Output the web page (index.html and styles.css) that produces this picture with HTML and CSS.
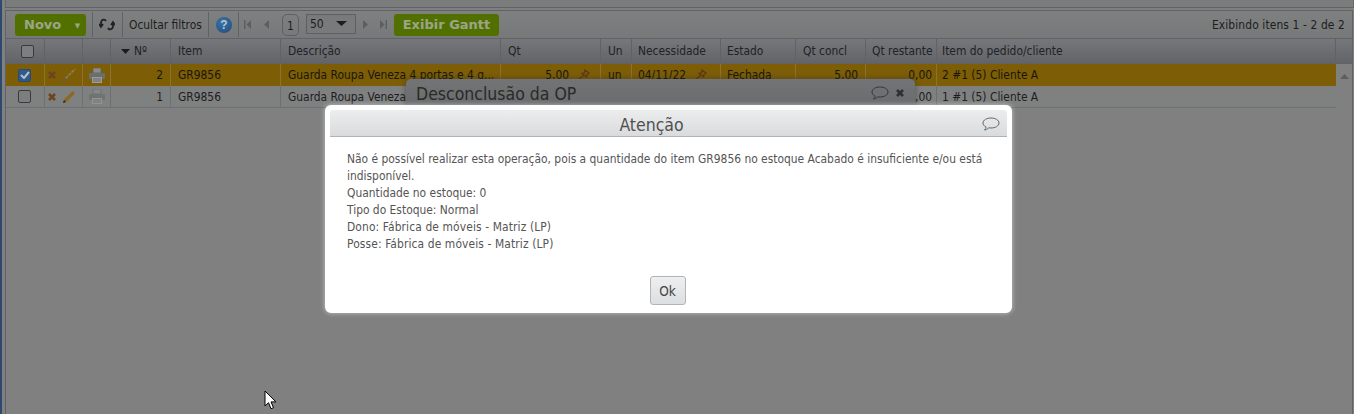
FILE: index.html
```html
<!DOCTYPE html>
<html lang="pt-BR">
<head>
<meta charset="utf-8">
<title>Ordens de produção</title>
<link rel="stylesheet" href="styles.css">
</head>
<body>
<svg class="defs" width="0" height="0" aria-hidden="true">
  <defs>
    <symbol id="x" viewBox="0 0 8 8"><path d="M1 1l6 6M7 1L1 7" stroke="currentColor" stroke-width="2.6" fill="none"/></symbol>
    <symbol id="pencil" viewBox="0 0 14 14"><path d="M1 13l1-3.500L10.500 1 13 3.500 4.500 12z" fill="currentColor"/><path d="M1 13l1-3 2 2z" fill="#2e2a20"/></symbol>
    <symbol id="pencil-thin" viewBox="0 0 14 14"><path d="M1 13L13 1" stroke="#8d8468" stroke-width="1.500" stroke-dasharray="3 1"/><path d="M1 13l2-2" stroke="#54585c" stroke-width="2"/></symbol>
    <symbol id="printer" viewBox="0 0 16 15"><path d="M4 0h8v5H4z" fill="#8a8c8c" stroke="#5d6060" stroke-width=".7"/><path d="M1 5h14a1 1 0 0 1 1 1v5H0V6a1 1 0 0 1 1-1z" fill="#6a6e6e"/><path d="M3 9h10v6H3z" fill="#9a9c9c"/><path d="M4 11h8M4 13h8" stroke="#686b6b"/></symbol>
    <symbol id="pin" viewBox="0 0 14 12"><path d="M8 1l4 3-2 1.500L9.500 8 5 4.500 7.500 4zM6.500 6.500L1 11" fill="none" stroke="currentColor" stroke-width="1.400"/></symbol>
    <symbol id="bubble" viewBox="0 0 18 14"><path d="M9 1c4.400 0 8 2.100 8 5s-3.600 5-8 5c-.8 0-1.500-.1-2.200-.2C5.600 12 4 13 2.500 13c1-.8 1.500-1.800 1.500-3C2.100 9 1 7.600 1 6c0-2.900 3.600-5 8-5z" fill="none" stroke="currentColor"/></symbol>
  </defs>
</svg>

<div class="topstrip"></div>
<main class="frame">
  <div class="toolbar">
    <button class="btn-green novo">Novo <span class="caret">▼</span></button>
    <span class="sep sep-a"></span>
    <svg class="refresh" width="16" height="13" viewBox="0 0 16 13"><path d="M7 3C6 1 2.500 1 2 4.500V8M0 6l2 3 2-3M9 10c1 2 4.500 2 5-1.500V5M12 7l2-3 2 3" fill="none" stroke="#202224" stroke-width="1.800"/></svg>
    <span class="sep"></span>
    <span class="tool-text">Ocultar filtros</span>
    <span class="sep"></span>
    <span class="help">?</span>
    <span class="sep"></span>
    <div class="pager">
      <svg class="pg pg-first" width="7" height="9" viewBox="0 0 7 9"><path d="M0 0h1.500v9H0zM7 0v9L2.500 4.500z" fill="#5c5e60"/></svg>
      <svg class="pg pg-prev" width="6" height="9" viewBox="0 0 6 9"><path d="M6 0v9L1 4.500z" fill="#5c5e60"/></svg>
      <span class="page-num">1</span>
      <div class="select">50<svg width="11" height="5" viewBox="0 0 11 5"><path d="M0 0h11L5.500 5z" fill="#1c1c1c"/></svg></div>
      <svg class="pg pg-next" width="6" height="9" viewBox="0 0 6 9"><path d="M0 0v9l5-4.500z" fill="#5c5e60"/></svg>
      <svg class="pg pg-last" width="7" height="9" viewBox="0 0 7 9"><path d="M7 0H5.500v9H7zM0 0v9l4.500-4.500z" fill="#5c5e60"/></svg>
    </div>
    <button class="btn-green gantt">Exibir Gantt</button>
    <span class="count">Exibindo itens 1 - 2 de 2</span>
  </div>

  <div class="grid-row head">
    <div class="cell center"><span class="check head-check"></span></div>
    <div class="cell"></div>
    <div class="cell"></div>
    <div class="cell sort"><svg width="9" height="5" viewBox="0 0 9 5"><path d="M0 0h9L4.500 5z" fill="#1c1c1c"/></svg>Nº</div>
    <div class="cell">Item</div>
    <div class="cell">Descrição</div>
    <div class="cell">Qt</div>
    <div class="cell">Un</div>
    <div class="cell date">Necessidade</div>
    <div class="cell date">Estado</div>
    <div class="cell">Qt concl</div>
    <div class="cell tight">Qt restante</div>
    <div class="cell last-col">Item do pedido/cliente</div>
    <div class="cell"></div>
  </div>

  <div class="body-wrap">
    <div class="rows">
      <div class="grid-row data selected">
        <div class="cell center"><span class="check row-check checked"><svg width="10" height="8" viewBox="0 0 10 8"><path d="M1 4l3 3 5-6" fill="none" stroke="#b8c0c8" stroke-width="2"/></svg></span></div>
        <div class="cell acts"><svg class="ic-x"><use href="#x"/></svg><svg class="ic-pencil"><use href="#pencil-thin"/></svg></div>
        <div class="cell center"><svg class="ic-printer"><use href="#printer"/></svg></div>
        <div class="cell right">2</div>
        <div class="cell">GR9856</div>
        <div class="cell">Guarda Roupa Veneza 4 portas e 4 g...</div>
        <div class="cell right qt">5,00 <svg class="ic-pin"><use href="#pin"/></svg></div>
        <div class="cell">un</div>
        <div class="cell date">04/11/22 <svg class="ic-pin"><use href="#pin"/></svg></div>
        <div class="cell date">Fechada</div>
        <div class="cell right">5,00</div>
        <div class="cell right rest">0,00</div>
        <div class="cell last-col">2 #1 (5) Cliente A</div>
      </div>
      <div class="grid-row data">
        <div class="cell center"><span class="check row-check"></span></div>
        <div class="cell acts"><svg class="ic-x"><use href="#x"/></svg><svg class="ic-pencil"><use href="#pencil"/></svg></div>
        <div class="cell center"><svg class="ic-printer dim"><use href="#printer"/></svg></div>
        <div class="cell right">1</div>
        <div class="cell">GR9856</div>
        <div class="cell">Guarda Roupa Veneza</div>
        <div class="cell"></div>
        <div class="cell"></div>
        <div class="cell"></div>
        <div class="cell"></div>
        <div class="cell"></div>
        <div class="cell right rest">0,00</div>
        <div class="cell last-col">1 #1 (5) Cliente A</div>
      </div>
    </div>
    <div class="scrollbar"><svg width="9" height="5" viewBox="0 0 9 5"><path d="M4.500 0L9 5H0z" fill="#5c5f62"/></svg></div>
  </div>
</main>

<section class="back-dialog">
  <div class="back-title">
    <span>Desconclusão da OP</span>
    <svg class="back-bubble"><use href="#bubble"/></svg>
    <svg class="back-x"><use href="#x"/></svg>
  </div>
</section>

<section class="dialog" role="alertdialog">
  <header class="dialog-title">
    <h1>Atenção</h1>
    <svg class="dialog-bubble"><use href="#bubble"/></svg>
  </header>
  <div class="dialog-body">
    <p>Não é possível realizar esta operação, pois a quantidade do item GR9856 no estoque Acabado é insuficiente e/ou está indisponível.</p>
    <p>Quantidade no estoque: 0</p>
    <p>Tipo do Estoque: Normal</p>
    <p class="owner">Dono: Fábrica de móveis - Matriz (LP)</p>
    <p class="owner">Posse: Fábrica de móveis - Matriz (LP)</p>
  </div>
  <footer class="dialog-foot"><button class="ok">Ok</button></footer>
</section>

<svg class="cursor" width="13" height="21" viewBox="0 0 13 21"><path d="M1 1v15l3.500-3.300 2.500 6 2.500-1-2.500-5.800H12z" fill="#fff" stroke="#000"/></svg>
</body>
</html>
```
FILE: styles.css
```css
* { box-sizing: border-box; }
html, body { height: 100%; }
body {
  margin: 0;
  height: 414px;
  overflow: hidden;
  position: relative;
  background: #808080;
  font-family: "DejaVu Sans Condensed", "DejaVu Sans", sans-serif;
  font-size: 11.900px;
  color: #1d1d1d;
  border-left: 2px solid #2d4a6e;
}
.defs { position: absolute; }
.topstrip {
  height: 8px;
  margin-left: 3px;
  border-bottom: 1px solid #5f6266;
  border-left: 1px solid #66686c;
  border-right: 1px solid #66686c;
  background: #7b7d7d;
}
.frame {
  margin: 2px 1px 0 3px;
  height: 404px;
  border: 1px solid #5f6368;
  border-bottom: 0;
  background: #808080;
}
.toolbar {
  height: 27px;
  display: flex;
  align-items: center;
  padding: 0 7px 0 9px;
  background: linear-gradient(#7f8181, #767879);
}
.btn-green {
  border: 0;
  border-radius: 3px;
  background: #527000;
  color: #9ca58a;
  font-family: "DejaVu Sans", sans-serif;
  font-weight: 700;
  font-size: 13px;
  height: 22px;
  padding: 0;
}
.novo { width: 71px; text-align: left; padding-left: 9px; }
.caret { font-size: 7px; margin-left: 9px; vertical-align: 1px; }
.gantt { width: 105px; margin-left: 7px; }
.sep { width: 1px; height: 25px; background: #606366; }
.sep-a { margin-left: 6px; }
.refresh { margin: 0 7px 0 6px; }
.tool-text { width: 73px; margin: 0 6px; white-space: nowrap; }
.help {
  width: 16px;
  height: 16px;
  border-radius: 50%;
  margin: 0 6px 0 7px;
  background: radial-gradient(circle at 40% 35%, #3b74a8, #1e4a78);
  color: #b8c4d0;
  font: 700 12px/16px "Liberation Sans", sans-serif;
  text-align: center;
}
.pager { display: flex; align-items: center; margin-left: 5px; }
.pg-prev { margin-left: 12px; }
.page-num {
  width: 17px;
  height: 22px;
  margin-left: 13px;
  border: 1px solid #5d6063;
  border-radius: 5px;
  text-align: center;
  line-height: 22px;
}
.select {
  width: 50px;
  height: 20px;
  margin: -2px 0 0 7px;
  padding: 0 8px 0 3px;
  border: 1px solid #5d6063;
  background: #787a7b;
  display: flex;
  align-items: center;
  justify-content: space-between;
  font-size: 12px;
}
.pg-next { margin-left: 7px; }
.pg-last { margin-left: 11px; }
.count { margin-left: auto; white-space: nowrap; letter-spacing: .12px; }

.grid-row {
  display: grid;
  grid-template-columns: 39px 38px 28px 60px 110px 220px 100px 31px 89px 75px 70px 71px 399px 16px;
}
.head {
  height: 26px;
  border-top: 1px solid #5f6368;
  border-bottom: 1px solid #5f6368;
  background: linear-gradient(#75777b, #626468);
  color: #202226;
}
.cell {
  display: flex;
  align-items: center;
  padding: 0 7px;
  white-space: nowrap;
  overflow: hidden;
  border-right: 1px solid #5f6368;
}
.head .cell:last-child { border-right: 0; }
.center { justify-content: center; padding: 0; }
.right { justify-content: flex-end; }
.tight { padding: 0 2px 0 6px; }
.sort { padding-left: 10px; gap: 4px; }
.last-col { padding-left: 5px; }
.check {
  width: 13px;
  height: 13px;
  border: 1px solid #383a3c;
  border-radius: 2px;
  background: #7c7e80;
  display: flex;
  align-items: center;
  justify-content: center;
}
.head-check { margin-left: 4px; }
.row-check { margin-right: 1px; }
.checked { background: #2e5a8e; border-color: #2c4a6e; }

.body-wrap { display: flex; }
.rows { width: 1330px; }
.data {
  height: 22px;
  grid-template-columns: 39px 38px 28px 60px 110px 220px 100px 31px 89px 75px 70px 71px 399px;
  background: #7f8181;
  border-bottom: 1px solid #6d7072;
}
.data .cell { border-right-color: #6d7072; }
.data .cell:last-child { border-right: 0; }
.selected {
  background: #7d5e07;
  border-bottom: 0;
  color: #1a1608;
}
.selected .cell { border-right-color: #8c7330; }
.acts { padding: 0 0 0 3px; gap: 6px; }
.ic-x { width: 8px; height: 8px; color: #6e4420; }
.ic-pencil { width: 14px; height: 14px; color: #8a6a20; }
.ic-printer { width: 16px; height: 15px; }
.dim { opacity: .7; }
.ic-pin { flex: none; width: 14px; height: 12px; margin-left: 8px; color: #5e3c14; }
.qt { padding-right: 9px; }
.date { padding-left: 6px; }
.rest { padding-right: 4px; }
.scrollbar { width: 16px; display: flex; justify-content: center; padding-top: 10px; }
.scrollbar svg { display: block; }

.back-dialog {
  position: absolute;
  left: 404px;
  top: 79px;
  width: 509px;
  height: 60px;
  border-radius: 5px 5px 0 0;
  background: linear-gradient(#727476, #5f6164);
  box-shadow: 0 0 6px rgba(50, 50, 50, .6);
}
.back-title {
  display: flex;
  align-items: center;
  height: 28px;
  padding: 2px 11px 0 10px;
  color: #2a2a26;
  font-size: 17.500px;
}
.back-bubble { width: 18px; height: 14px; margin: -3px 0 0 auto; color: #34383c; }
.back-x { width: 8px; height: 8px; margin: -3px 0 0 7px; color: #2c3034; }

.dialog {
  position: absolute;
  left: 323px;
  top: 105px;
  width: 687px;
  height: 208px;
  border: 5px solid #fff;
  border-radius: 6px;
  background: #fff;
  box-shadow: 0 0 5px rgba(255, 255, 255, .55);
  display: flex;
  flex-direction: column;
}
.dialog-title {
  position: relative;
  height: 27px;
  flex: none;
  padding-right: 34px;
  border-bottom: 1px solid #b0b3b5;
  border-radius: 3px 3px 0 0;
  background: linear-gradient(#eceded, #d9dbdd);
}
.dialog-title h1 {
  margin: 0;
  font-weight: 400;
  font-size: 17.500px;
  line-height: 30px;
  text-align: center;
  color: #505050;
}
.dialog-bubble { position: absolute; right: 7px; top: 7px; width: 18px; height: 14px; color: #62676c; }
.dialog-body { padding: 14px 17px 0; color: #555; line-height: 17px; }
.dialog-body p { margin: 0; }
.dialog-body .owner { letter-spacing: .12px; }
.dialog-foot { margin-top: auto; padding: 0 2px 3px 0; display: flex; justify-content: center; }
.ok {
  width: 36px;
  height: 29px;
  border: 1px solid #b2b4b6;
  border-radius: 3px;
  background: linear-gradient(#eeeff0, #dcdee0);
  color: #444;
  font-family: inherit;
  font-size: 13.500px;
}
.cursor { position: absolute; left: 262px; top: 390px; }
```
